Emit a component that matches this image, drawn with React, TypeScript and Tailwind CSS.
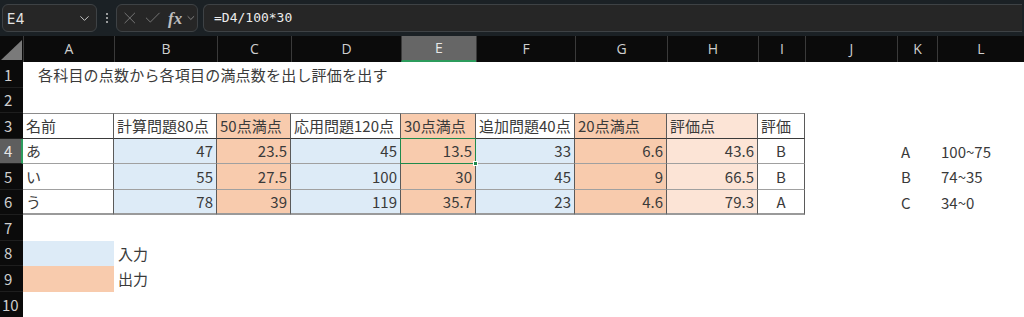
import { ChevronDown, X, Check } from 'lucide-react'

const cols = ['A', 'B', 'C', 'D', 'E', 'F', 'G', 'H', 'I', 'J', 'K', 'L']

type Cell = { t?: string; bg?: string }

const W = 'bg-white'
const BL = 'bg-[#ddebf7]'
const OR = 'bg-[#f8cbad]'
const PE = 'bg-[#fce4d6]'

const header: Cell[] = [
  { t: '名前', bg: W },
  { t: '計算問題80点', bg: W },
  { t: '50点満点', bg: OR },
  { t: '応用問題120点', bg: W },
  { t: '30点満点', bg: OR },
  { t: '追加問題40点', bg: W },
  { t: '20点満点', bg: OR },
  { t: '評価点', bg: PE },
  { t: '評価', bg: W },
]

const data = [
  ['あ', '47', '23.5', '45', '13.5', '33', '6.6', '43.6', 'B'],
  ['い', '55', '27.5', '100', '30', '45', '9', '66.5', 'B'],
  ['う', '78', '39', '119', '35.7', '23', '4.6', '79.3', 'A'],
]
const dataBg = [W, BL, OR, BL, OR, BL, OR, PE, W]
const legend = [
  ['A', '100~75'],
  ['B', '74~35'],
  ['C', '34~0'],
]

function RowHead({ n, active }: { n: number; active?: boolean }) {
  return (
    <div
      className={`flex h-[25.5px] items-center border-b border-[#1e1e1e] pl-[4px] text-[15px] ${
        active ? 'border-r-2 border-r-[#2c9b5c] bg-[#5e5e5e] text-[#e6e6e6]' : 'bg-[#0b0b0b] text-[#cfcfcf]'
      }`}
    >
      {n}
    </div>
  )
}

export default function App() {
  return (
    <div className="h-[317px] w-[1024px] overflow-hidden bg-white font-['Noto_Sans_CJK_JP','Noto_Sans',sans-serif]">
      {/* formula bar */}
      <div className="flex h-[36px] items-center bg-[#1b2125] px-[2px]">
        <div className="flex h-[28px] w-[95px] items-center justify-between rounded-md border border-[#3e4245] bg-[#262626] pl-[4px] pr-[4px] font-['Inter',sans-serif] text-[14px] text-[#e3e3e3]">
          <span>E4</span>
          <ChevronDown size={15} className="text-[#c8c8c8]" strokeWidth={1.6} />
        </div>
        <div className="flex w-[19px] flex-col items-center gap-[2px]">
          <span className="h-[2px] w-[2px] rounded-full bg-[#c4c4c4]" />
          <span className="h-[2px] w-[2px] rounded-full bg-[#c4c4c4]" />
          <span className="h-[2px] w-[2px] rounded-full bg-[#c4c4c4]" />
        </div>
        <div className="flex h-[28px] w-[82px] items-center gap-[3px] rounded-md border border-[#3e4245] bg-[#262626] pl-[3px]">
          <X size={20} strokeWidth={1.1} className="text-[#7d7d7d]" />
          <Check size={20} strokeWidth={1.1} className="text-[#7d7d7d]" />
          <span className="ml-[3px] font-['Liberation_Serif',serif] text-[17px] font-bold italic leading-none text-[#bdbdbd]">fx</span>
          <ChevronDown size={12} strokeWidth={1.6} className="text-[#9a9a9a]" />
        </div>
        <div className="ml-[5px] flex h-[28px] flex-1 items-center rounded-l-md border border-r-0 border-[#3e4245] bg-[#262626] pl-[10px] font-['DejaVu_Sans_Mono',monospace] text-[13px] text-[#ececec]">
          =D4/100*30
        </div>
      </div>

      <div className="grid grid-cols-[23px_91px_103px_74px_110px_75px_99px_92px_91px_47px_92px_40px_1fr] text-[15px] leading-none text-[#3a3a3a]">
        {/* column headers */}
        <div className="relative h-[26px] bg-[#0b0b0b]">
          <svg className="absolute left-[1px] top-[4px]" width="21" height="20" viewBox="0 0 21 20">
            <polygon points="0,20 21,20 21,0" fill="#7a7a7a" />
          </svg>
        </div>
        {cols.map((c) => (
          <div
            key={c}
            className={`flex h-[26px] items-center justify-center border-l border-[#3a3a3a] font-['Open_Sans',sans-serif] text-[14px] ${
              c === 'E' ? 'border-b-2 border-b-[#2c9b5c] bg-[#666] text-[#e8e8e8]' : 'bg-[#0b0b0b] text-[#cfcfcf]'
            }`}
          >
            {c}
          </div>
        ))}

        {/* row 1 */}
        <RowHead n={1} />
        <div className="col-span-12 flex h-[25.5px] items-center pl-[15px] tracking-[0.2px]">
          各科目の点数から各項目の満点数を出し評価を出す
        </div>

        {/* row 2 */}
        <RowHead n={2} />
        <div className="col-span-12 h-[25.5px]" />

        {/* row 3 */}
        <RowHead n={3} />
        {header.map((h, i) => (
          <div
            key={i}
            className={`flex h-[25.5px] items-center border-r border-t border-b border-r-[#5a5a5a] border-t-[#8a8a8a] border-b-[#3a3a3a] pl-[3px] ${h.bg}`}
          >
            {h.t}
          </div>
        ))}
        <div className="col-span-3" />

        {/* rows 4-6 */}
        {data.map((row, r) => (
          <div key={r} className="contents">
            <RowHead n={r + 4} active={r === 0} />
            {row.map((v, i) => {
              const sel = r === 0 && i === 4
              const align = i === 0 ? 'justify-start pl-[3px]' : i === 8 ? 'justify-center' : 'justify-end pr-[3px]'
              return (
                <div
                  key={i}
                  className={`relative flex h-[25.5px] items-center border-r border-b border-r-[#5a5a5a] ${
                    r === 2 ? 'border-b-2 border-b-[#9a9a9a]' : 'border-b-[#a0a0a0]'
                  } ${align} ${dataBg[i]} ${sel ? 'z-10' : ''}`}
                >
                  {v}
                  {sel && (
                    <>
                      <span className="absolute -left-px -top-px bottom-[-1px] right-[-1px] border border-[#1f8a4c]" />
                      <span className="absolute -bottom-[3px] -right-[3px] h-[5px] w-[5px] border border-white bg-[#1f8a4c]" />
                    </>
                  )}
                </div>
              )
            })}
            <div />
            <div className="flex h-[25.5px] items-center pl-[4px]">{legend[r][0]}</div>
            <div className="flex h-[25.5px] items-center pl-[4px]">{legend[r][1]}</div>
          </div>
        ))}

        {/* row 7 */}
        <RowHead n={7} />
        <div className="col-span-12 h-[25.5px]" />

        {/* row 8 */}
        <RowHead n={8} />
        <div className={`h-[25.5px] ${BL}`} />
        <div className="col-span-11 flex h-[25.5px] items-center pl-[4px]">入力</div>

        {/* row 9 */}
        <RowHead n={9} />
        <div className={`h-[25.5px] ${OR}`} />
        <div className="col-span-11 flex h-[25.5px] items-center pl-[4px]">出力</div>

        {/* row 10 */}
        <div className="flex h-[25.5px] items-center bg-[#0b0b0b] pl-[2px] text-[15px] text-[#cfcfcf]">10</div>
        <div className="col-span-12 h-[25.5px]" />
      </div>
    </div>
  )
}
